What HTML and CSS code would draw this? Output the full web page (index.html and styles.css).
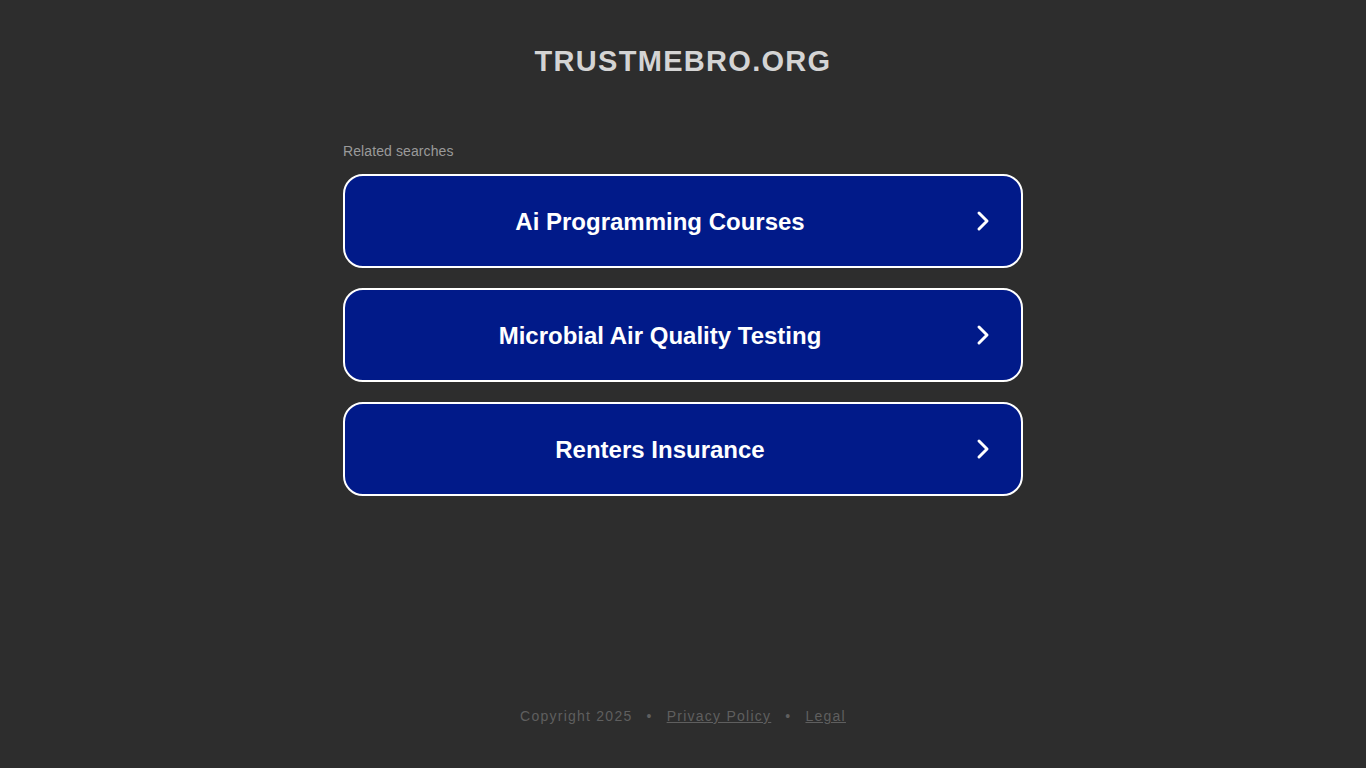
FILE: index.html
```html
<!DOCTYPE html>
<html>
<head>
<meta charset="utf-8">
<link rel="stylesheet" href="styles.css">
</head>
<body>
<div class="page">
  <header class="header"><h1 class="title">TRUSTMEBRO.ORG</h1></header>
  <main class="main">
    <div class="related">Related searches</div>
    <div class="list">
      <a class="item" href="#"><span class="label">Ai Programming Courses</span><svg class="chev" viewBox="0 0 16 24" width="16" height="24"><path d="M4 4 L12 12 L4 20" fill="none" stroke="#fff" stroke-width="3" stroke-linecap="round" stroke-linejoin="round"/></svg></a>
      <a class="item" href="#"><span class="label">Microbial Air Quality Testing</span><svg class="chev" viewBox="0 0 16 24" width="16" height="24"><path d="M4 4 L12 12 L4 20" fill="none" stroke="#fff" stroke-width="3" stroke-linecap="round" stroke-linejoin="round"/></svg></a>
      <a class="item" href="#"><span class="label">Renters Insurance</span><svg class="chev" viewBox="0 0 16 24" width="16" height="24"><path d="M4 4 L12 12 L4 20" fill="none" stroke="#fff" stroke-width="3" stroke-linecap="round" stroke-linejoin="round"/></svg></a>
    </div>
  </main>
  <footer class="footer">
    <span>Copyright 2025</span><span class="dot">•</span><a href="#" class="flink">Privacy Policy</a><span class="dot">•</span><a href="#" class="flink">Legal</a>
  </footer>
</div>
</body>
</html>
```
FILE: styles.css
```css
html, body { margin: 0; padding: 0; }
body {
  background: #2d2d2d;
  font-family: "Liberation Sans", Arial, sans-serif;
  width: 1366px;
  height: 768px;
  overflow: hidden;
}
.page {
  height: 768px;
  display: flex;
  flex-direction: column;
  align-items: center;
}
.header { padding-top: 43px; height: 100px; box-sizing: border-box; }
.title {
  margin: 0;
  font-size: 29px;
  font-weight: bold;
  letter-spacing: 1.3px;
  color: #d4d4d4;
  line-height: 36px;
}
.main { width: 680px; padding-top: 43px; flex: 1; }
.related {
  font-size: 14px;
  letter-spacing: 0.1px;
  color: #9a9a9a;
  line-height: 16px;
  margin-bottom: 15px;
}
.list { display: flex; flex-direction: column; gap: 20px; }
.item {
  box-sizing: border-box;
  height: 94px;
  border: 2px solid #fff;
  border-radius: 20px;
  background: #011a89;
  display: flex;
  align-items: center;
  padding: 0 30px 0 0;
  text-decoration: none;
}
.label {
  flex: 1;
  text-align: center;
  color: #fff;
  font-size: 24px;
  font-weight: bold;
  padding-top: 2px;
}
.chev { flex: none; }
.footer {
  height: 60px;
  font-size: 14px;
  letter-spacing: 1.25px;
  color: #5f5f5f;
  line-height: 16px;
  display: flex;
}
.dot { margin: 0 14px; }
.flink { color: #5f5f5f; text-decoration: underline; }
```
